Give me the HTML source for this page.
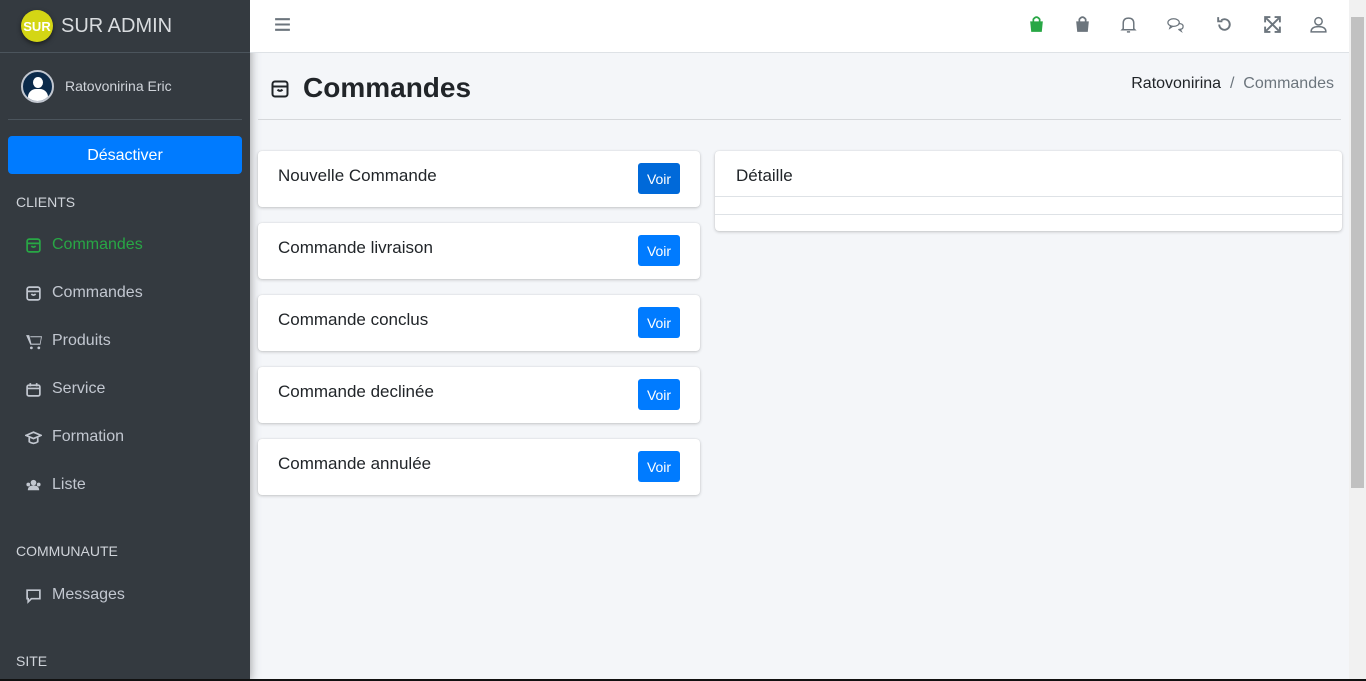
<!DOCTYPE html>
<html><head><meta charset="utf-8"><style>
*{box-sizing:border-box;margin:0;padding:0}
body{width:1366px;height:681px;overflow:hidden;font-family:"Liberation Sans",sans-serif;background:#f4f6f9;position:relative}
.sb{position:absolute;left:0;top:0;width:250px;height:681px;background:#343a40;color:#c2c7d0;box-shadow:0 0 10px rgba(0,0,0,.4)}
.brand{height:53px;border-bottom:1px solid #4b545c;display:flex;align-items:center;padding-left:21px}
.logo{width:32px;height:32px;border-radius:50%;background:#d4d615;color:#fff;font-size:13px;font-weight:bold;display:flex;align-items:center;justify-content:center;box-shadow:0 2px 5px rgba(0,0,0,.5)}
.brand span{font-size:20px;color:#d9dcdf;margin-left:8px}
.user{margin:0 8px;height:67px;border-bottom:1px solid #4b545c;display:flex;align-items:center;padding-left:13px}
.av{width:33px;height:33px;border-radius:50%;background:#0b2a4a;border:2px solid #c2c7d0;overflow:hidden;position:relative}
.av:before{content:"";position:absolute;left:10px;top:5px;width:10px;height:11px;border-radius:50%;background:#fff}
.av:after{content:"";position:absolute;left:5px;top:17px;width:20px;height:16px;border-radius:8px 8px 0 0;background:#fff}
.user span{font-size:14px;margin-left:11px;color:#d0d4da}
.btn{margin:16px 8px 0;height:38px;background:#007bff;border-radius:4px;color:#fff;font-size:16px;text-align:center;line-height:40px}
.hd{position:absolute;left:16px;font-size:14px;color:#d0d4da}
.it{position:absolute;left:25px;font-size:16px;display:flex;align-items:center;color:#c2c7d0}
.it svg{width:17px;height:17px;margin-right:10px;flex-shrink:0}
.top{position:absolute;left:250px;top:0;width:1099px;height:53px;background:#fff;border-bottom:1px solid #dee2e6}
.ic{position:absolute;top:15px;width:19px;height:19px}
h1{position:absolute;left:303px;top:72px;font-size:28px;font-weight:bold;color:#212529}
.bc{position:absolute;right:32px;top:75px;font-size:16px;color:#212529}
.bc i{font-style:normal;color:#6c757d}
.hr{position:absolute;left:258px;top:119px;width:1083px;border-top:1px solid #d6d8db}
.card{position:absolute;left:258px;width:442px;height:56px;background:#fff;border-radius:4px;box-shadow:0 0 1px rgba(0,0,0,.125),0 1px 3px rgba(0,0,0,.2)}
.card p{position:absolute;left:20px;top:15px;font-size:17px;color:#212529}
.card b{position:absolute;left:380px;top:12px;width:42px;height:31px;background:#007bff;color:#fff;border-radius:3px;font-weight:normal;font-size:14px;line-height:33px;text-align:center}
.det{position:absolute;left:715px;top:151px;width:627px;height:80px;background:#fff;border-radius:4px;box-shadow:0 0 1px rgba(0,0,0,.125),0 1px 3px rgba(0,0,0,.2)}
.sc{position:absolute;right:0;top:0;width:17px;height:681px;background:#f1f1f1}
.sc div{position:absolute;left:2px;top:17px;width:13px;height:471px;background:#c1c1c1}
</style></head><body>
<div class="sb">
<div class="brand"><div class="logo">SUR</div><span>SUR ADMIN</span></div>
<div class="user"><div class="av"></div><span>Ratovonirina Eric</span></div>
<div class="btn">Désactiver</div>
<div class="hd" style="top:194px">CLIENTS</div>
<div class="it" style="top:236px;color:#28a745"><svg viewBox="0 0 16 16" fill="none" stroke="#28a745" stroke-width="1.6"><rect x="2" y="2" width="12" height="12" rx="2"/><path d="M2 6h12M6 8.5q2 2 4 0"/></svg>Commandes</div>
<div class="it" style="top:284px"><svg viewBox="0 0 16 16" fill="none" stroke="#c2c7d0" stroke-width="1.6"><rect x="2" y="2" width="12" height="12" rx="2"/><path d="M2 6h12M6 8.5q2 2 4 0"/></svg>Commandes</div>
<div class="it" style="top:332px"><svg viewBox="0 0 16 16" fill="#c2c7d0"><path d="M1 2h3l2 8h8l1-6H5v-1h11l-1.5 8H5z"/><circle cx="6" cy="14" r="1.3"/><circle cx="13" cy="14" r="1.3"/></svg>Produits</div>
<div class="it" style="top:380px"><svg viewBox="0 0 16 16" fill="none" stroke="#c2c7d0" stroke-width="1.6"><rect x="2" y="4" width="12" height="10" rx="1.5"/><path d="M2 7h12M5 2v3M11 2v3"/></svg>Service</div>
<div class="it" style="top:428px"><svg viewBox="0 0 16 16" fill="none" stroke="#c2c7d0" stroke-width="1.6"><path d="M1 6l7-3 7 3-7 3z"/><path d="M4 8v4q4 3 8 0V8"/></svg>Formation</div>
<div class="it" style="top:476px"><svg viewBox="0 0 18 16" fill="#c2c7d0"><circle cx="9" cy="5" r="3"/><path d="M3 13q0-5 6-5t6 5z"/><circle cx="3.5" cy="7" r="2"/><circle cx="14.5" cy="7" r="2"/></svg>Liste</div>
<div class="hd" style="top:543px">COMMUNAUTE</div>
<div class="it" style="top:586px"><svg viewBox="0 0 16 16" fill="none" stroke="#c2c7d0" stroke-width="1.6"><path d="M2 3h12v8H6l-3 3v-3H2z"/></svg>Messages</div>
<div class="hd" style="top:653px">SITE</div>
</div>
<div class="top">
<svg class="ic" style="left:23px" viewBox="0 0 18 18" stroke="#6c757d" stroke-width="2"><path d="M2 4h14M2 9h14M2 14h14"/></svg>
<svg class="ic" style="left:777px" viewBox="0 0 18 18" fill="#28a745"><path d="M3 6h12l-1 10H4z"/><path d="M6 7V4q3-4 6 0v3" fill="none" stroke="#28a745" stroke-width="1.6"/></svg>
<svg class="ic" style="left:823px" viewBox="0 0 18 18" fill="#6c757d"><path d="M3 6h12l-1 10H4z"/><path d="M6 7V4q3-4 6 0v3" fill="none" stroke="#6c757d" stroke-width="1.6"/></svg>
<svg class="ic" style="left:869px" viewBox="0 0 18 18" fill="none" stroke="#6c757d" stroke-width="1.4"><path d="M4 13V8q0-5 5-5t5 5v5l1 1H3z"/><path d="M7.5 16h3"/></svg>
<svg class="ic" style="left:916px" viewBox="0 0 20 18" fill="none" stroke="#6c757d" stroke-width="1.3"><ellipse cx="8" cy="7" rx="6" ry="4"/><path d="M5 10l-1 3 3-2M13 8q5 0 5 3t-3 3l1 2-3-2"/></svg>
<svg class="ic" style="left:965px" viewBox="0 0 18 18" fill="none" stroke="#6c757d" stroke-width="1.8"><path d="M4 9a5 5 0 1 0 2-4M3 2v4h4"/></svg>
<svg class="ic" style="left:1013px" viewBox="0 0 18 18" fill="none" stroke="#6c757d" stroke-width="1.8"><path d="M3 3l12 12M15 3L3 15M2 7V2h5M11 2h5v5M16 11v5h-5M7 16H2v-5"/></svg>
<svg class="ic" style="left:1059px" viewBox="0 0 18 18" fill="none" stroke="#6c757d" stroke-width="1.4"><circle cx="9" cy="6" r="3.5"/><path d="M2 16q0-5 7-5t7 5z"/></svg>
</div>
<svg style="position:absolute;left:270px;top:79px" width="20" height="20" viewBox="0 0 16 16" fill="none" stroke="#212529" stroke-width="1.6"><rect x="2" y="2" width="12" height="12" rx="2"/><path d="M2 6h12M6 8.5q2 2 4 0"/></svg>
<h1>Commandes</h1>
<div class="bc">Ratovonirina &nbsp;<i>/ &nbsp;Commandes</i></div>
<div class="hr"></div>
<div class="card" style="top:151px"><p>Nouvelle Commande</p><b style="background:#0069d9">Voir</b></div>
<div class="card" style="top:223px"><p>Commande livraison</p><b>Voir</b></div>
<div class="card" style="top:295px"><p>Commande conclus</p><b>Voir</b></div>
<div class="card" style="top:367px"><p>Commande declinée</p><b>Voir</b></div>
<div class="card" style="top:439px"><p>Commande annulée</p><b>Voir</b></div>
<div class="det"><div style="position:absolute;left:21px;top:15px;font-size:17px;color:#212529">Détaille</div>
<div style="position:absolute;left:0;right:0;top:45px;border-top:1px solid #dee2e6"></div>
<div style="position:absolute;left:0;right:0;top:63px;border-top:1px solid #dee2e6"></div></div>
<div class="sc"><div></div></div>
<div style="position:absolute;left:0;top:679px;width:1366px;height:2px;background:#111"></div>
</body></html>
